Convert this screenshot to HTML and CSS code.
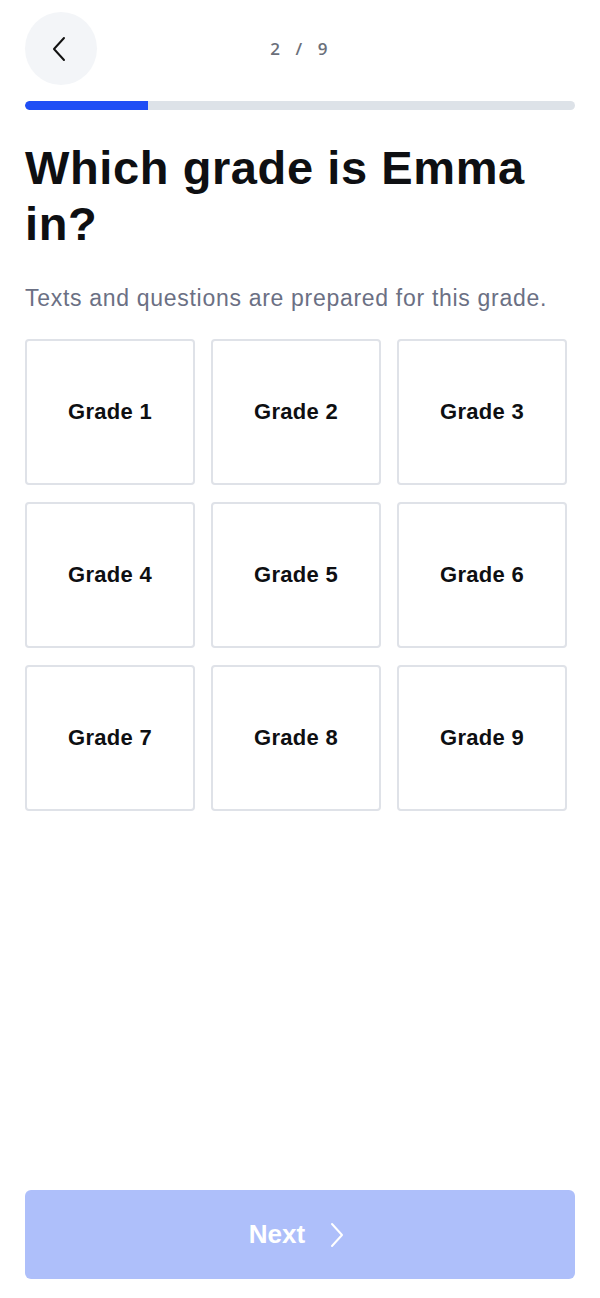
FILE: index.html
```html
<!DOCTYPE html>
<html lang="en">
<head>
  <meta charset="UTF-8" />
  <meta name="viewport" content="width=device-width, initial-scale=1" />
  <title>Grade</title>
  <link rel="stylesheet" href="styles.css">
</head>
<body>
  <div class="page">
    <!-- TOP BAR -->
    <header class="topbar">
      <button class="back-btn" aria-label="Back">
        <svg width="24" height="26" viewBox="0 0 24 26" fill="none" stroke="#111" stroke-width="2" stroke-linecap="round" stroke-linejoin="round">
          <path d="M16 2 L6 13 L16 24" />
        </svg>
      </button>
      <span class="step">2 / 9</span>
      <span class="spacer"></span>
    </header>

    <div class="progress"><div class="progress-fill" style="width: 22.4%"></div></div>

    <h1 class="title">Which grade is Emma in?</h1>
    <p class="subtitle">Texts and questions are prepared for this grade.</p>

    <!-- GRADES -->
    <section class="grades">
      <button class="grade">Grade 1</button>
      <button class="grade">Grade 2</button>
      <button class="grade">Grade 3</button>
      <button class="grade">Grade 4</button>
      <button class="grade">Grade 5</button>
      <button class="grade">Grade 6</button>
      <button class="grade">Grade 7</button>
      <button class="grade">Grade 8</button>
      <button class="grade">Grade 9</button>
    </section>

    <footer class="footer">
      <button class="next-btn" disabled>
        <span>Next</span>
        <svg width="16" height="26" viewBox="0 0 16 26" fill="none" stroke="#fff" stroke-width="2" stroke-linecap="round" stroke-linejoin="round">
          <path d="M3 2 L13 13 L3 24" />
        </svg>
      </button>
    </footer>
  </div>
</body>
</html>
```

FILE: styles.css
```css
:root {
  --blue: #1f4ef5;
  --blue-light: #aebffa;
  --track: #dde2e8;
  --border: #dfe2e8;
  --text: #0e0f12;
  --muted: #6b7084;
}
* {
  box-sizing: border-box;
}
body {
  margin: 0;
  font-family: "Liberation Sans", Arial, sans-serif;
  color: var(--text);
  background: #fff;
}
.page {
  height: 1298px;
  padding: 12px 25px 19px;
  display: flex;
  flex-direction: column;
}

/* top bar */
.topbar {
  display: flex;
  align-items: center;
  justify-content: space-between;
  height: 73px;
}
.back-btn {
  width: 72px;
  height: 73px;
  border-radius: 50%;
  border: none;
  background: #f3f5f8;
  display: flex;
  align-items: center;
  justify-content: center;
  padding: 0 2px 0 0;
  cursor: pointer;
}
.step {
  font-family: "Open Sans", sans-serif;
  font-size: 17px;
  font-weight: 600;
  color: #6b6f7a;
  letter-spacing: 0.25em;
  word-spacing: 0.15em;
  margin-left: 2px;
}
.spacer {
  width: 72px;
}

/* progress */
.progress {
  margin-top: 16px;
  height: 9px;
  border-radius: 5px;
  background: var(--track);
  overflow: hidden;
}
.progress-fill {
  height: 100%;
  background: var(--blue);
  border-radius: 5px 0 0 5px;
}

/* heading */
.title {
  margin: 30px 0 0;
  font-size: 47px;
  line-height: 56px;
  font-weight: 700;
  letter-spacing: 0.6px;
  padding-right: 20px;
}
.subtitle {
  margin: 31px 0 0;
  font-size: 23px;
  line-height: 30px;
  color: var(--muted);
  letter-spacing: 0.7px;
}

/* grade grid */
.grades {
  margin-top: 26px;
  display: grid;
  grid-template-columns: repeat(3, 170px);
  grid-auto-rows: 146px;
  column-gap: 16px;
  row-gap: 17px;
}
.grade {
  border: 2px solid var(--border);
  border-radius: 4px;
  background: #fff;
  font-family: inherit;
  font-size: 22px;
  font-weight: 700;
  color: var(--text);
  letter-spacing: 0.3px;
  cursor: pointer;
}

/* footer */
.footer {
  margin-top: auto;
}
.next-btn {
  width: 100%;
  height: 89px;
  border: none;
  border-radius: 6px;
  background: var(--blue-light);
  color: #fff;
  font-family: inherit;
  font-size: 26px;
  font-weight: 700;
  display: flex;
  align-items: center;
  justify-content: center;
  gap: 24px;
  padding: 0 6px 0 0;
}
```
